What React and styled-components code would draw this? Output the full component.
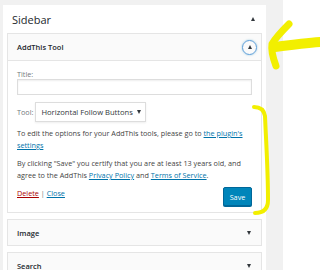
import React from "react";
import styled, { createGlobalStyle } from "styled-components";

const Global = createGlobalStyle`
  html, body { margin: 0; padding: 0; background: #fff; }
  body { font-family: "Open Sans", "Noto Sans", sans-serif; color: #444; }
  * { box-sizing: border-box; }
`;

const Page = styled.div`
  position: relative;
  width: 320px;
  height: 270px;
  overflow: hidden;
  display: flex;
  background: #fff;
`;

const Backdrop = styled.div`
  flex: 0 0 283px;
  height: 270px;
  background: #f1f1f1;
  padding: 5px 17px 0 3px;
`;

const Panel = styled.div`
  background: #fff;
  height: 100%;
`;

const PanelHead = styled.div`
  height: 28px;
  display: flex;
  align-items: center;
  justify-content: space-between;
  padding: 0 11px 0 9px;
  font-size: 11px;
  color: #23282d;
`;

const Widgets = styled.div`
  display: flex;
  flex-direction: column;
  gap: 6px;
  padding: 0 4px;
`;

const Widget = styled.div`
  flex-shrink: 0;
  border: 1px solid #e5e5e5;
  background: #fff;
`;

const WidgetHead = styled.div`
  height: ${(p) => (p.$open ? 27 : 25)}px;
  background: #fafafa;
  display: flex;
  align-items: center;
  justify-content: space-between;
  padding: 0 ${(p) => (p.$open ? 4 : 10)}px 0 9px;
  font-size: 7.5px;
  font-weight: 600;
  color: #23282d;
  border-bottom: ${(p) => (p.$open ? "1px solid #e5e5e5" : "none")};
`;

const Toggle = styled.span`
  width: 15px;
  height: 15px;
  border-radius: 50%;
  border: 1px solid #5b9dd9;
  box-shadow: 0 0 2px rgba(30, 140, 190, 0.5);
  display: flex;
  align-items: center;
  justify-content: center;
`;

const Caret = styled.span`
  width: 0;
  height: 0;
  border-left: 2.5px solid transparent;
  border-right: 2.5px solid transparent;
  ${(p) =>
    p.$up
      ? "border-bottom: 4px solid #32373c;"
      : "border-top: 4px solid #32373c;"}
`;

const Body = styled.div`
  padding: 8px 9px 6px 9px;
  display: flex;
  flex-direction: column;
  font-size: 7.25px;
  color: #444;
`;

const Label = styled.label`
  line-height: 10px;
  color: #72777c;
  font-size: 7.25px;
`;

const Input = styled.div`
  flex-shrink: 0;
  height: 16px;
  border: 1px solid #ddd;
  box-shadow: inset 0 1px 2px rgba(0, 0, 0, 0.07);
  margin-bottom: 7px;
`;

const ToolRow = styled.div`
  display: flex;
  align-items: center;
  gap: 2px;
  height: 20px;
  flex-shrink: 0;
`;

const Select = styled.div`
  width: 111px;
  height: 20px;
  border: 1px solid #ddd;
  display: flex;
  align-items: center;
  justify-content: space-between;
  padding: 0 4px 0 5px;
  color: #32373c;
  font-size: 7.6px;
  line-height: 10px;
  box-shadow: 0 1px 2px rgba(0, 0, 0, 0.07);
`;

const Para = styled.p`
  margin: ${(p) => p.$mt}px 0 0 0;
  line-height: 12px;
`;

const Link = styled.a`
  color: ${(p) => (p.$danger ? "#a00" : "#0073aa")};
  text-decoration: underline;
`;

const Actions = styled.div`
  display: flex;
  justify-content: space-between;
  align-items: flex-start;
  margin-top: 6px;
  line-height: 12px;
`;

const Sep = styled.span`
  color: #72777c;
`;

const SaveButton = styled.button`
  width: 29px;
  height: 19px;
  background: #0085ba;
  border: 1px solid #006799;
  border-radius: 2px;
  box-shadow: 0 1px 0 #006799;
  color: #fff;
  font-family: "Open Sans", sans-serif;
  font-size: 7.25px;
  line-height: 10px;
  padding: 0;
`;

const Scribble = styled.svg`
  position: absolute;
  left: 0;
  top: 0;
  pointer-events: none;
`;

export default function App() {
  return (
    <Page>
      <Global />
      <Backdrop>
        <Panel>
          <PanelHead>
            <span>Sidebar</span>
            <Caret $up />
          </PanelHead>
          <Widgets>
            <Widget>
              <WidgetHead $open>
                <span>AddThis Tool</span>
                <Toggle>
                  <Caret $up />
                </Toggle>
              </WidgetHead>
              <Body>
                <Label>Title:</Label>
                <Input />
                <ToolRow>
                  <Label>Tool:</Label>
                  <Select>
                    <span>Horizontal Follow Buttons</span>
                    <Caret />
                  </Select>
                </ToolRow>
                <Para $mt={5}>
                  To edit the options for your AddThis tools, please go to{" "}
                  <Link>the plugin's settings</Link>
                </Para>
                <Para $mt={6}>
                  By clicking "Save" you certify that you are at least 13 years
                  old, and agree to the AddThis <Link>Privacy Policy</Link> and{" "}
                  <Link>Terms of Service</Link>.
                </Para>
                <Actions>
                  <span>
                    <Link $danger>Delete</Link> <Sep>|</Sep> <Link>Close</Link>
                  </span>
                  <SaveButton>Save</SaveButton>
                </Actions>
              </Body>
            </Widget>
            <Widget>
              <WidgetHead>
                <span>Image</span>
                <Caret />
              </WidgetHead>
            </Widget>
            <Widget>
              <WidgetHead>
                <span>Search</span>
                <Caret />
              </WidgetHead>
            </Widget>
          </Widgets>
        </Panel>
      </Backdrop>
      <Scribble width="320" height="270" viewBox="0 0 320 270">
        <g fill="none" stroke="#f2ef00" strokeLinecap="round" strokeLinejoin="round">
          <path d="M289 24 C282 31 276 37 272 44 C271 50 273 58 276 66" strokeWidth="7" />
          <path d="M275 47 C290 45 305 43 320 42" strokeWidth="10" />
          <path d="M254 107 C260 107 264 110 265 116 C266 140 268 170 268 200 C268 210 262 213 255 213" strokeWidth="4" />
        </g>
      </Scribble>
    </Page>
  );
}
